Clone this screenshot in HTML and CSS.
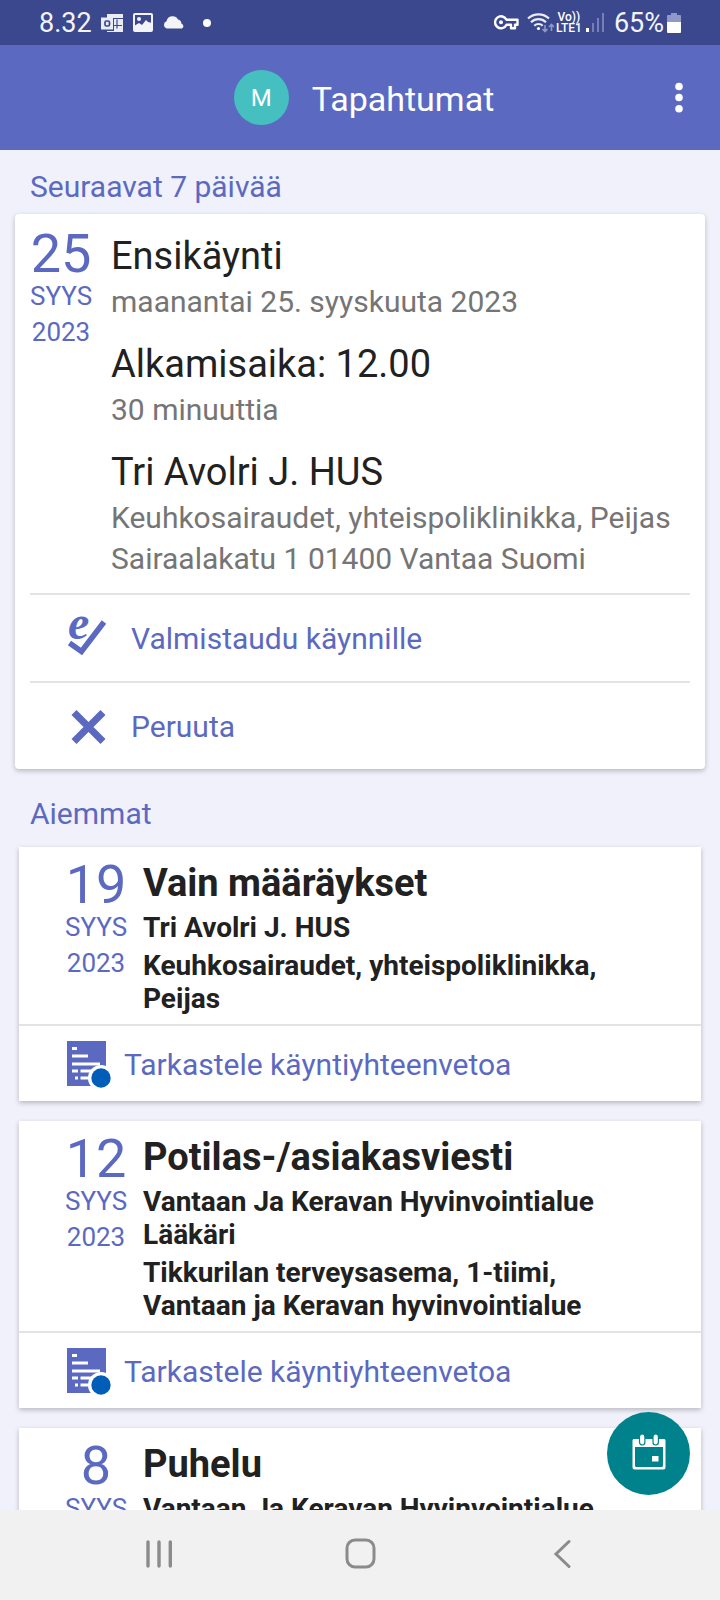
FILE: index.html
```html
<!DOCTYPE html>
<html lang="fi">
<head>
<meta charset="utf-8">
<meta name="viewport" content="width=device-width, initial-scale=1">
<title>Tapahtumat</title>
<link rel="stylesheet" href="styles.css">
</head>
<body>
<svg class="sprite" aria-hidden="true">
  <symbol id="summary" viewBox="0 0 44 47">
    <path fill="#5c69c1" d="M0 0h39v45H0z"/>
    <path fill="#fff" d="M5 6h5v3H5zM5 13.500h16v3H5zM5 21.500h28v3H5zM5 28.500h6v3H5zM13.500 28.500h12v3h-12zM8 35.500h3v3H8zM13.500 35.500h10v3h-10z"/>
    <circle cx="34" cy="37" r="13" fill="#fff"/>
    <circle cx="34" cy="37" r="9.700" fill="#005eb8"/>
  </symbol>
</svg>
<div class="screen">
  <div class="status">
    <div class="status-group">
      <span class="clock">8.32</span>
      <svg class="status-mail" width="22" height="18" viewBox="0 0 22 18" aria-hidden="true">
        <path fill="#e9ebf5" d="M6 0h16v4H6zM13 5h9v13H6v-1h7z"/>
        <path stroke="#3b488e" stroke-width="1.2" d="M16 5.500v9M13 11.500h8"/>
        <path fill="#e9ebf5" d="M0 3.500h12v12H0z"/>
        <rect x="4" y="7" width="4.500" height="5" rx="1.500" fill="none" stroke="#3b488e" stroke-width="1.700"/>
      </svg>
      <svg class="status-image" width="20" height="19" viewBox="0 0 20 19" aria-hidden="true">
        <rect x="1" y="1" width="18" height="17" rx="1" fill="none" stroke="#f3f4fa" stroke-width="2"/>
        <circle cx="6" cy="6" r="2" fill="#f3f4fa"/>
        <path fill="#f3f4fa" d="M1 13l5-3 3 2 4-5 2 2 4 1v8H1z"/>
      </svg>
      <svg class="status-cloud" width="22" height="13" viewBox="0 0 22 13" aria-hidden="true">
        <path fill="#f3f4fa" d="M4 12.500a3.800 3.800 0 0 1-.5-7.300A6.200 6.200 0 0 1 15 3.500a4.500 4.500 0 0 1 3.500 4.200 2.600 2.600 0 0 1 .5 4.800z"/>
      </svg>
      <svg class="status-dot" width="8" height="8" viewBox="0 0 8 8" aria-hidden="true"><circle cx="4" cy="4" r="4" fill="#fff"/></svg>
    </div>
    <div class="status-group">
      <svg class="status-key" width="25" height="15" viewBox="0 0 25 15" aria-hidden="true">
        <path fill="none" stroke="#fff" stroke-width="2.400" stroke-linejoin="round" d="M12.500 4.800A6 6 0 1 0 12.500 9.800H17v3.500h4V9.800h2.500V4.800z"/>
        <circle cx="7" cy="7.300" r="2" fill="#fff"/>
      </svg>
      <svg class="status-wifi" width="27" height="20" viewBox="0 0 27 20" aria-hidden="true">
        <g fill="none" stroke="#e9ebf5" stroke-width="2.200">
          <path d="M1 5.500a15.500 15.500 0 0 1 21 0M4 9.300a10.500 10.500 0 0 1 15 0M7.300 12.700a6 6 0 0 1 8.400 0"/>
        </g>
        <circle cx="11.500" cy="15.500" r="1.600" fill="#fff"/>
        <path fill="none" stroke="#8f98c6" stroke-width="1.600" d="M18 12v6M15.500 16l2.500 2.600L20.500 16M24.500 18v-6M22 14l2.500-2.600L27 14"/>
      </svg>
      <span class="volte"><span>Vo))</span><span>LTE1</span></span>
      <svg class="status-signal" width="19" height="19" viewBox="0 0 19 19" aria-hidden="true">
        <path fill="#fff" d="M0 15h3v4H0z"/>
        <path fill="#7580b8" d="M6 10h2v9H6zM11 5h2v14h-2zM16 0h2v19h-2z"/>
      </svg>
      <span class="battery-text">65%</span>
      <svg class="status-battery" width="14" height="20" viewBox="0 0 14 20" aria-hidden="true">
        <path fill="#8f98c6" d="M4 0h6v2h3a1 1 0 0 1 1 1v6H0V3a1 1 0 0 1 1-1h3z"/>
        <path fill="#fff" d="M0 9h14v10a1 1 0 0 1-1 1H1a1 1 0 0 1-1-1z"/>
      </svg>
    </div>
  </div>

  <header class="appbar">
    <div class="appbar-title">
      <span class="avatar">M</span>
      <h1>Tapahtumat</h1>
    </div>
    <button class="menu" type="button" aria-label="Valikko">
      <svg width="8" height="32" viewBox="0 0 8 32" aria-hidden="true"><g fill="#fff"><circle cx="4" cy="4.500" r="3.800"/><circle cx="4" cy="15.500" r="3.800"/><circle cx="4" cy="26.800" r="3.800"/></g></svg>
    </button>
  </header>

  <main class="content">
    <h2 class="section-title">Seuraavat 7 päivää</h2>
    <article class="card upcoming">
      <div class="card-body">
        <div class="date"><span class="day">25</span><span>SYYS</span><span>2023</span></div>
        <div class="details">
          <section><h3>Ensikäynti</h3><p>maanantai 25. syyskuuta 2023</p></section>
          <section><h3>Alkamisaika: 12.00</h3><p>30 minuuttia</p></section>
          <section><h3>Tri Avolri J. HUS</h3><p>Keuhkosairaudet, yhteispoliklinikka, Peijas</p><p>Sairaalakatu 1 01400 Vantaa Suomi</p></section>
        </div>
      </div>
      <button class="action" type="button">
        <svg class="prepare" width="40" height="40" viewBox="0 0 40 40" aria-hidden="true">
          <path fill="none" stroke="#5c69c1" stroke-width="5.600" d="M2.500 24L14.500 32.500 37 3"/>
          <text class="e-mark" x="1" y="20">e</text>
        </svg>
        <span>Valmistaudu käynnille</span>
      </button>
      <button class="action" type="button">
        <svg width="40" height="40" viewBox="0 0 40 40" aria-hidden="true"><path fill="none" stroke="#5c69c1" stroke-width="7" d="M7 5.500L36 34.500M36 5.500L7 34.500"/></svg>
        <span>Peruuta</span>
      </button>
    </article>

    <h2 class="section-title">Aiemmat</h2>
    <div class="past-list">
      <article class="card past">
        <div class="card-body">
          <div class="date"><span class="day">19</span><span>SYYS</span><span>2023</span></div>
          <div class="details"><h3>Vain määräykset</h3><p>Tri Avolri J. HUS</p><p>Keuhkosairaudet, yhteispoliklinikka, Peijas</p></div>
        </div>
        <button class="action" type="button"><svg width="44" height="47" aria-hidden="true"><use href="#summary"/></svg><span>Tarkastele käyntiyhteenvetoa</span></button>
      </article>
      <article class="card past">
        <div class="card-body">
          <div class="date"><span class="day">12</span><span>SYYS</span><span>2023</span></div>
          <div class="details"><h3>Potilas-/asiakasviesti</h3><p>Vantaan Ja Keravan Hyvinvointialue Lääkäri</p><p>Tikkurilan terveysasema, 1-tiimi, Vantaan ja Keravan hyvinvointialue</p></div>
        </div>
        <button class="action" type="button"><svg width="44" height="47" aria-hidden="true"><use href="#summary"/></svg><span>Tarkastele käyntiyhteenvetoa</span></button>
      </article>
      <article class="card past">
        <div class="card-body">
          <div class="date"><span class="day">8</span><span>SYYS</span></div>
          <div class="details"><h3>Puhelu</h3><p>Vantaan Ja Keravan Hyvinvointialue</p></div>
        </div>
      </article>
    </div>
    <button class="fab" type="button" aria-label="Varaa aika">
      <svg width="34" height="40" viewBox="0 0 34 40" aria-hidden="true">
        <path fill="#fff" fill-rule="evenodd" d="M2 5h30a1.500 1.500 0 0 1 1.500 1.500v27a2 2 0 0 1-2 2h-29a2 2 0 0 1-2-2v-27A1.500 1.500 0 0 1 2 5zM3 13v18.500a1.500 1.500 0 0 0 1.500 1.500h25a1.500 1.500 0 0 0 1.500-1.500V13z"/>
        <path fill="#fff" d="M20 22h6.500v5.500H20z"/>
        <g fill="#fff" stroke="#00828d" stroke-width="1.200"><rect x="7.500" y="0" width="5.400" height="11" rx="2.700"/><rect x="21" y="0" width="5.400" height="11" rx="2.700"/></g>
      </svg>
    </button>
  </main>

  <nav class="navbar" aria-label="Järjestelmä">
    <button type="button" aria-label="Viimeisimmät"><svg width="28" height="30" viewBox="0 0 28 30" aria-hidden="true"><path stroke="#8b8b8b" stroke-width="3.400" stroke-linecap="round" d="M3 3v24M14 3v24M25.300 3v24"/></svg></button>
    <button type="button" aria-label="Koti"><svg width="31" height="31" viewBox="0 0 31 31" aria-hidden="true"><rect x="2" y="2" width="27" height="27" rx="8" fill="none" stroke="#8b8b8b" stroke-width="3"/></svg></button>
    <button type="button" aria-label="Takaisin"><svg width="18" height="30" viewBox="0 0 18 30" aria-hidden="true"><path fill="none" stroke="#8b8b8b" stroke-width="3" stroke-linecap="round" d="M16 2.500L3 15l13 12.500"/></svg></button>
  </nav>
</div>
</body>
</html>
```
FILE: styles.css
```css
* {
  box-sizing: border-box;
}

body {
  margin: 0;
  background: #f0f1fa;
  font-family: Roboto, "Liberation Sans", sans-serif;
  color: #212121;
}

h1, h2, h3, p {
  margin: 0;
  font-weight: 400;
}

button {
  margin: 0;
  padding: 0;
  border: 0;
  background: none;
  color: inherit;
  font: inherit;
  text-align: left;
  cursor: pointer;
}

svg {
  display: block;
  flex: none;
}

.sprite {
  position: absolute;
  width: 0;
  height: 0;
}

.screen {
  display: flex;
  flex-direction: column;
  height: 100vh;
}

/* System status bar */
.status {
  display: flex;
  justify-content: space-between;
  flex: none;
  height: 45px;
  padding: 0 39px;
  background: #3b488e;
  color: #f3f4fa;
}

.status-group {
  display: flex;
  align-items: center;
}

.clock,
.battery-text {
  font-size: 27px;
  line-height: 46px;
}

.status-mail { margin-left: 9px; }
.status-image { margin-left: 10px; }
.status-cloud { margin-left: 10px; }
.status-dot { margin-left: 18px; }
.status-wifi { margin-left: 8px; }
.status-signal { margin-left: 4px; }
.battery-text { margin-left: 9px; }
.status-battery { margin-left: 3px; }

.volte {
  display: flex;
  flex-direction: column;
  margin-left: 2px;
  color: #fff;
  font-size: 12px;
  font-weight: 500;
  line-height: 11px;
  text-align: center;
}

/* App bar */
.appbar {
  display: grid;
  grid-template-columns: 1fr auto 1fr;
  align-items: center;
  flex: none;
  height: 105px;
  padding: 0 37px 0 45px;
  background: #5c69c1;
  color: #fff;
}

.appbar-title {
  grid-column: 2;
  display: flex;
  align-items: center;
  gap: 23px;
}

.appbar-title h1 {
  padding-top: 2px;
  font-size: 34px;
  line-height: 44px;
}

.avatar {
  display: grid;
  place-items: center;
  width: 55px;
  height: 55px;
  border-radius: 50%;
  background: #45bfbf;
  font-size: 24px;
}

.menu {
  justify-self: end;
}

/* Event list */
.content {
  position: relative;
  flex: 1;
  min-height: 0;
  overflow: hidden;
  padding-top: 19px;
}

.section-title {
  padding: 0 30px;
  color: #5c69c1;
  font-size: 30px;
  line-height: 36px;
}

.card {
  background: #fff;
  box-shadow: 0 2px 5px rgba(0, 0, 0, 0.24);
}

.card-body {
  display: flex;
}

.date {
  display: flex;
  flex-direction: column;
  align-items: center;
  flex: none;
  width: 62px;
  color: #5c69c1;
  font-size: 26px;
  line-height: 36px;
}

.day {
  font-size: 54px;
  line-height: 48px;
}

.details {
  flex: 1;
  min-width: 0;
}

.details h3 {
  font-size: 38px;
  line-height: 44px;
}

.action {
  display: flex;
  align-items: center;
  width: 100%;
  padding-top: 2px;
  border-top: 2px solid #e3e3e5;
  color: #5c69c1;
  font-size: 30px;
  line-height: 36px;
}

.prepare {
  overflow: visible;
}

.e-mark {
  fill: #5c69c1;
  font-family: "Liberation Serif", serif;
  font-size: 48px;
  font-style: italic;
  font-weight: 700;
}

.upcoming {
  margin: 9px 15px 27px;
  padding: 0 15px;
  border-radius: 4px;
}

.upcoming .card-body {
  gap: 19px;
  padding: 16px 0 14px;
}

.upcoming .details {
  display: flex;
  flex-direction: column;
  gap: 20px;
  padding-top: 4px;
}

.upcoming .details h3 {
  margin-bottom: 3px;
}

.upcoming .details p {
  color: #757575;
  font-size: 30px;
  line-height: 41px;
}

.upcoming .action {
  gap: 24px;
  height: 88px;
  padding-left: 37px;
}

.past-list {
  display: flex;
  flex-direction: column;
  gap: 20px;
  padding: 15px 19px;
}

.past .card-body {
  gap: 16px;
  padding: 14px 46px 9px;
}

.past .details h3 {
  margin-bottom: 6px;
  font-weight: 700;
}

.past .details p {
  font-size: 28px;
  font-weight: 700;
  line-height: 33px;
}

.past .details p + p {
  margin-top: 5px;
}

.past .action {
  gap: 13px;
  height: 77px;
  padding-left: 48px;
}

/* Floating button over the list */
.fab {
  position: absolute;
  right: 30px;
  bottom: 15px;
  display: grid;
  place-items: center;
  width: 83px;
  height: 83px;
  border-radius: 50%;
  background: #00828d;
}

/* System navigation */
.navbar {
  display: flex;
  justify-content: space-around;
  align-items: center;
  flex: none;
  height: 90px;
  padding: 0 57px 3px 58px;
  background: #f1f1f1;
}

.navbar button {
  display: grid;
  place-items: center;
  width: 60px;
  height: 60px;
}
```
